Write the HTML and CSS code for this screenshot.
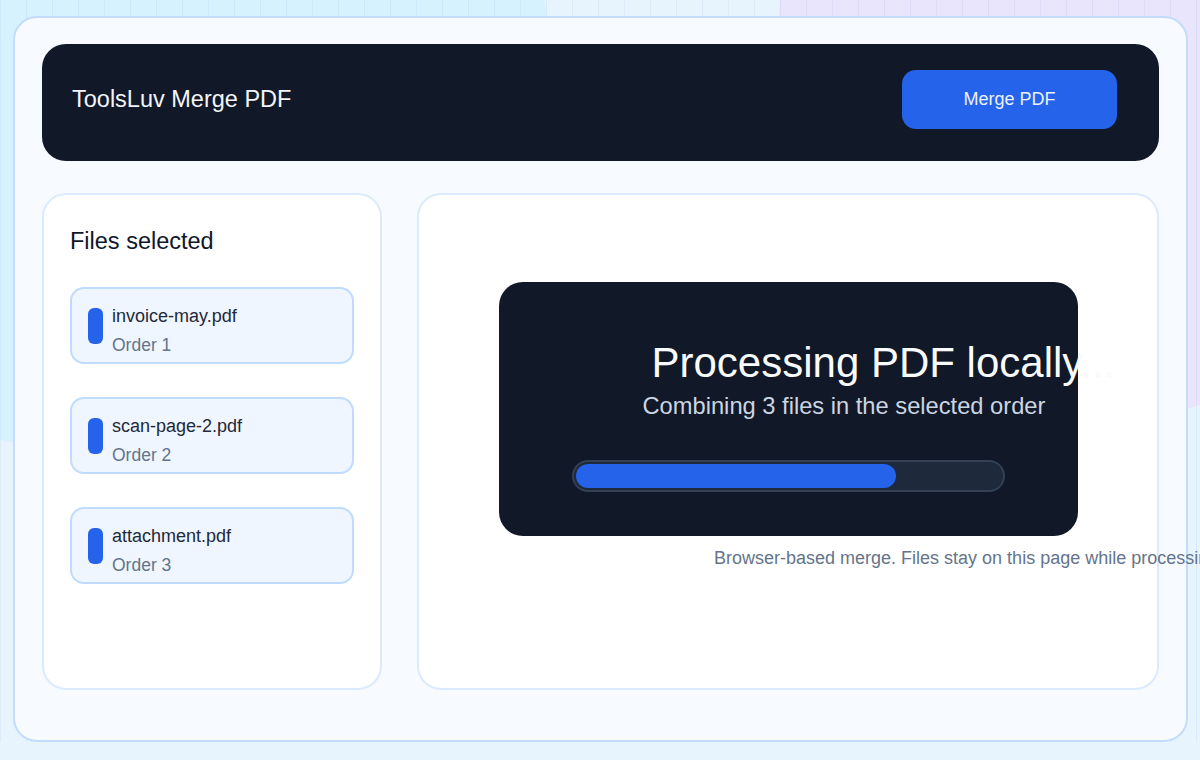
FILE: index.html
```html
<!DOCTYPE html>
<html lang="en">

<head>
  <meta charset="UTF-8">
  <meta name="viewport" content="width=device-width, initial-scale=1.0">
  <title>ToolsLuv Merge PDF</title>
  <link rel="stylesheet" href="styles.css">
</head>

<body>

  <main class="shell">
    <header class="topbar">
      <h1 class="brand">ToolsLuv Merge PDF</h1>
      <button class="merge-btn">Merge PDF</button>
    </header>

    <div class="workspace">
      <aside class="files-panel">
        <h2>Files selected</h2>
        <ul class="file-list">
          <li class="file-item">
            <span class="file-mark"></span>
            <div>
              <div class="file-name">invoice-may.pdf</div>
              <div class="file-order">Order 1</div>
            </div>
          </li>
          <li class="file-item">
            <span class="file-mark"></span>
            <div>
              <div class="file-name">scan-page-2.pdf</div>
              <div class="file-order">Order 2</div>
            </div>
          </li>
          <li class="file-item">
            <span class="file-mark"></span>
            <div>
              <div class="file-name">attachment.pdf</div>
              <div class="file-order">Order 3</div>
            </div>
          </li>
        </ul>
      </aside>

      <section class="preview-panel">
        <div class="busy-card">
          <div class="busy-title">Processing PDF locally...</div>
          <div class="busy-sub">Combining 3 files in the selected order</div>
          <div class="progress">
            <div class="progress-fill" style="width: 75.5%"></div>
          </div>
        </div>
        <p class="note">Browser-based merge. Files stay on this page while processing.</p>
      </section>
    </div>
  </main>

</body>

</html>
```

FILE: styles.css
```css
  html,
  body {
    overflow: hidden;
  }

  body {
    margin: 0;
    padding: 16px 12px 0 13px;
    font-family: "Liberation Sans", Arial, sans-serif;
    color: #0f172a;
    background-color: #e8f4fd;
    /* faint vertical grid over two soft colour blobs */
    background-image:
      linear-gradient(90deg, rgba(96, 140, 200, 0.09) 1px, transparent 1px),
      radial-gradient(450px 390px at 100px 60px, #d5f2fe 99.8%, transparent 100%),
      radial-gradient(324px 363px at 1100px 60px, #e9e5fd 99.8%, transparent 100%);
    background-size: 26px 100%, 100% 100%, 100% 100%;
    background-repeat: repeat-x, no-repeat, no-repeat;
  }

  .shell {
    box-sizing: border-box;
    height: 726px;
    display: flex;
    flex-direction: column;
    padding: 26px 27px 50px;
    background: #f7fbff;
    border: 2px solid #c4dcfb;
    border-radius: 24px;
  }

  /* top bar */

  .topbar {
    box-sizing: border-box;
    height: 117px;
    display: flex;
    align-items: center;
    justify-content: space-between;
    padding: 0 42px 6px 30px;
    background: #111827;
    border-radius: 24px;
  }

  .brand {
    margin: 0;
    font-size: 23.5px;
    font-weight: 400;
    color: #f1f5f9;
  }

  .merge-btn {
    width: 215px;
    height: 59px;
    border: none;
    border-radius: 14px;
    background: #2563eb;
    color: #eaf1ff;
    font-family: inherit;
    font-size: 18px;
  }

  /* panels */

  .workspace {
    flex: 1;
    display: grid;
    grid-template-columns: 340px minmax(0, 1fr);
    gap: 35px;
    margin-top: 32px;
  }

  .files-panel,
  .preview-panel {
    min-width: 0;
    background: #fff;
    border: 2px solid #dbeafe;
    border-radius: 24px;
  }

  .files-panel {
    padding: 32px 26px 0;
  }

  .files-panel h2 {
    margin: 0 0 32px;
    font-size: 23.5px;
    font-weight: 400;
    line-height: 1.2;
    color: #0f172a;
  }

  .file-list {
    list-style: none;
    margin: 0;
    padding: 0;
    display: flex;
    flex-direction: column;
    gap: 33px;
  }

  .file-item {
    box-sizing: border-box;
    height: 77px;
    display: flex;
    align-items: flex-start;
    gap: 9px;
    padding: 15px 16px 0;
    background: #eff6ff;
    border: 2px solid #bfdbfe;
    border-radius: 14px;
  }

  .file-mark {
    width: 15px;
    height: 36px;
    margin-top: 4px;
    border-radius: 6px;
    background: #2563eb;
  }

  .file-name {
    font-size: 18px;
    line-height: 24px;
    color: #1e293b;
  }

  .file-order {
    margin-top: 5px;
    font-size: 17.5px;
    line-height: 24px;
    color: #64748b;
  }

  /* processing state */

  .preview-panel {
    padding-top: 87px;
  }

  .busy-card {
    width: 579px;
    box-sizing: border-box;
    margin: 0 auto;
    padding: 57px 73px 44px;
    background: #111827;
    border-radius: 24px;
  }

  .busy-title {
    padding-left: 80px;
    white-space: nowrap;
    font-size: 42px;
    line-height: 48px;
    color: #f8fafc;
  }

  .busy-sub {
    margin: 6px 0 0 71px;
    white-space: nowrap;
    font-size: 23.7px;
    line-height: 26px;
    color: #cbd5e1;
  }

  .progress {
    box-sizing: border-box;
    height: 32px;
    margin-top: 41px;
    padding: 2px;
    background: #1e293b;
    border: 2px solid #334155;
    border-radius: 999px;
  }

  .progress-fill {
    height: 100%;
    background: #2563eb;
    border-radius: 999px;
  }

  .note {
    margin: 12px 0 0 295px;
    white-space: nowrap;
    font-size: 18px;
    line-height: 21px;
    color: #64748b;
  }
```
